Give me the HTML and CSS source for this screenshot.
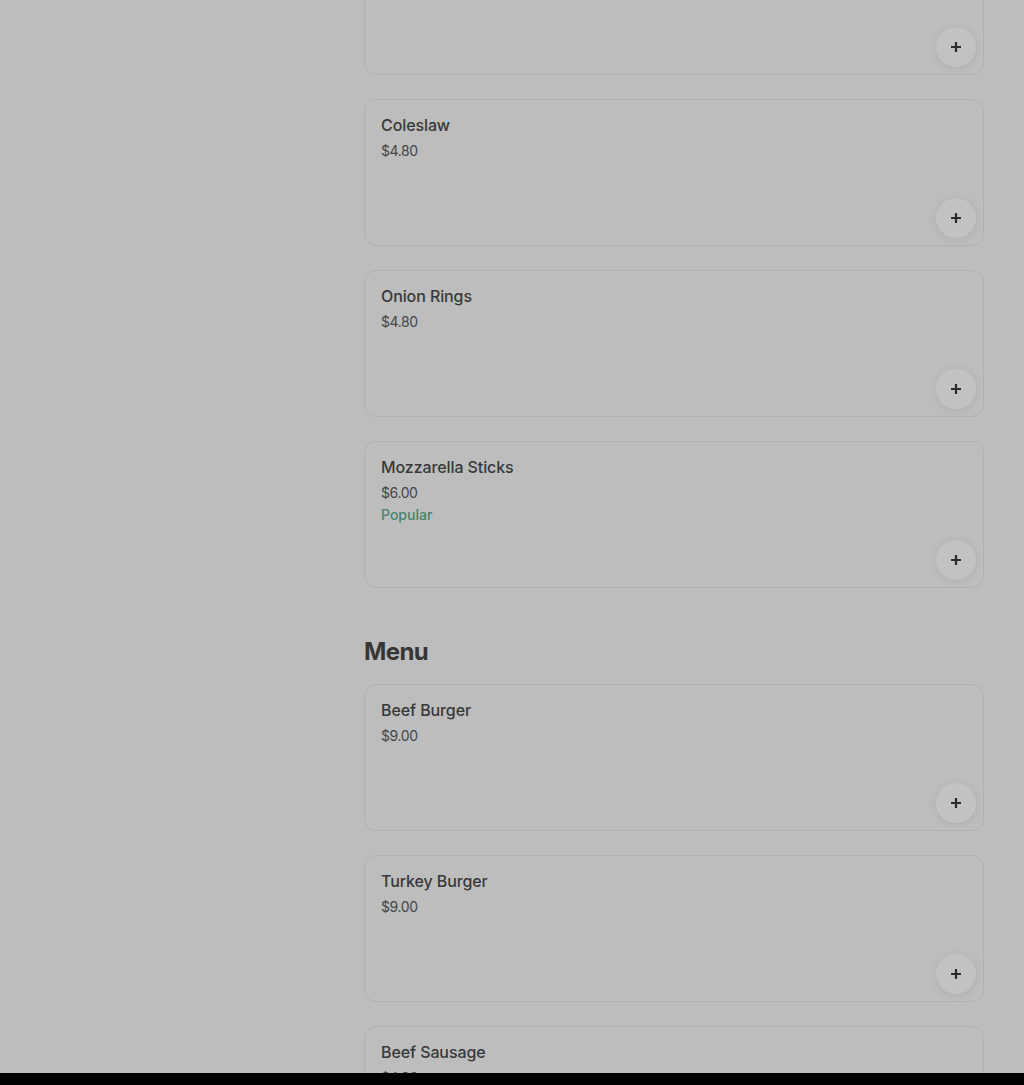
FILE: index.html
```html
<!DOCTYPE html>
<html>
<head>
<meta charset="utf-8">
<link rel="stylesheet" href="styles.css">
</head>
<body>
<main class="page">
  <section class="section">
    <div class="list">
      <div class="card">
        <button class="add"><svg viewBox="0 0 12 12" width="12" height="12"><path d="M6 1v10M1 6h10" stroke="#2b2b2b" stroke-width="2.2" fill="none"/></svg></button>
      </div>
      <div class="card">
        <div class="name">Coleslaw</div>
        <div class="price">$4.80</div>
        <button class="add"><svg viewBox="0 0 12 12" width="12" height="12"><path d="M6 1v10M1 6h10" stroke="#2b2b2b" stroke-width="2.2" fill="none"/></svg></button>
      </div>
      <div class="card">
        <div class="name">Onion Rings</div>
        <div class="price">$4.80</div>
        <button class="add"><svg viewBox="0 0 12 12" width="12" height="12"><path d="M6 1v10M1 6h10" stroke="#2b2b2b" stroke-width="2.2" fill="none"/></svg></button>
      </div>
      <div class="card">
        <div class="name">Mozzarella Sticks</div>
        <div class="price">$6.00</div>
        <div class="tag">Popular</div>
        <button class="add"><svg viewBox="0 0 12 12" width="12" height="12"><path d="M6 1v10M1 6h10" stroke="#2b2b2b" stroke-width="2.2" fill="none"/></svg></button>
      </div>
    </div>
  </section>
  <section class="section menu">
    <h2 class="heading">Menu</h2>
    <div class="list">
      <div class="card">
        <div class="name">Beef Burger</div>
        <div class="price">$9.00</div>
        <button class="add"><svg viewBox="0 0 12 12" width="12" height="12"><path d="M6 1v10M1 6h10" stroke="#2b2b2b" stroke-width="2.2" fill="none"/></svg></button>
      </div>
      <div class="card">
        <div class="name">Turkey Burger</div>
        <div class="price">$9.00</div>
        <button class="add"><svg viewBox="0 0 12 12" width="12" height="12"><path d="M6 1v10M1 6h10" stroke="#2b2b2b" stroke-width="2.2" fill="none"/></svg></button>
      </div>
      <div class="card">
        <div class="name">Beef Sausage</div>
        <div class="price">$4.00</div>
        <button class="add"><svg viewBox="0 0 12 12" width="12" height="12"><path d="M6 1v10M1 6h10" stroke="#2b2b2b" stroke-width="2.2" fill="none"/></svg></button>
      </div>
    </div>
  </section>
</main>
<div class="bottombar"></div>
</body>
</html>
```
FILE: styles.css
```css
html, body {
  margin: 0;
  padding: 0;
  background: #bdbdbd;
  font-family: Inter, "Noto Sans", "Liberation Sans", sans-serif;
  overflow: hidden;
  height: 1085px;
}
.page {
  margin-left: 364px;
  width: 620px;
  margin-top: -72px;
}
.list {
  display: flex;
  flex-direction: column;
  gap: 24px;
}
.card {
  position: relative;
  box-sizing: border-box;
  height: 147px;
  border: 1px solid #b1b1b1;
  border-radius: 12px;
  padding: 14px 16px 16px;
}
.name {
  font-size: 16px;
  font-weight: 500;
  line-height: 22px;
  color: #383838;
  letter-spacing: -0.1px;
}
.price {
  margin-top: 5px;
  font-size: 14px;
  line-height: 20px;
  color: #454545;
  letter-spacing: -0.4px;
}
.tag {
  margin-top: 2px;
  font-size: 14px;
  line-height: 20px;
  font-weight: 500;
  color: #4a8468;
}
.add {
  position: absolute;
  right: 7px;
  bottom: 7px;
  width: 40px;
  height: 40px;
  border-radius: 50%;
  border: none;
  background: #c2c2c2;
  box-shadow: 0 1px 8px rgba(0,0,0,0.08);
  padding: 0;
  display: flex;
  align-items: center;
  justify-content: center;
}
.menu {
  margin-top: 42px;
}
.heading {
  margin: 0 0 10px 0;
  font-size: 24px;
  line-height: 44px;
  font-weight: 700;
  color: #363636;
  letter-spacing: -0.6px;
}
.bottombar {
  position: fixed;
  left: 0;
  right: 0;
  bottom: 0;
  height: 12px;
  background: #000;
}
```
